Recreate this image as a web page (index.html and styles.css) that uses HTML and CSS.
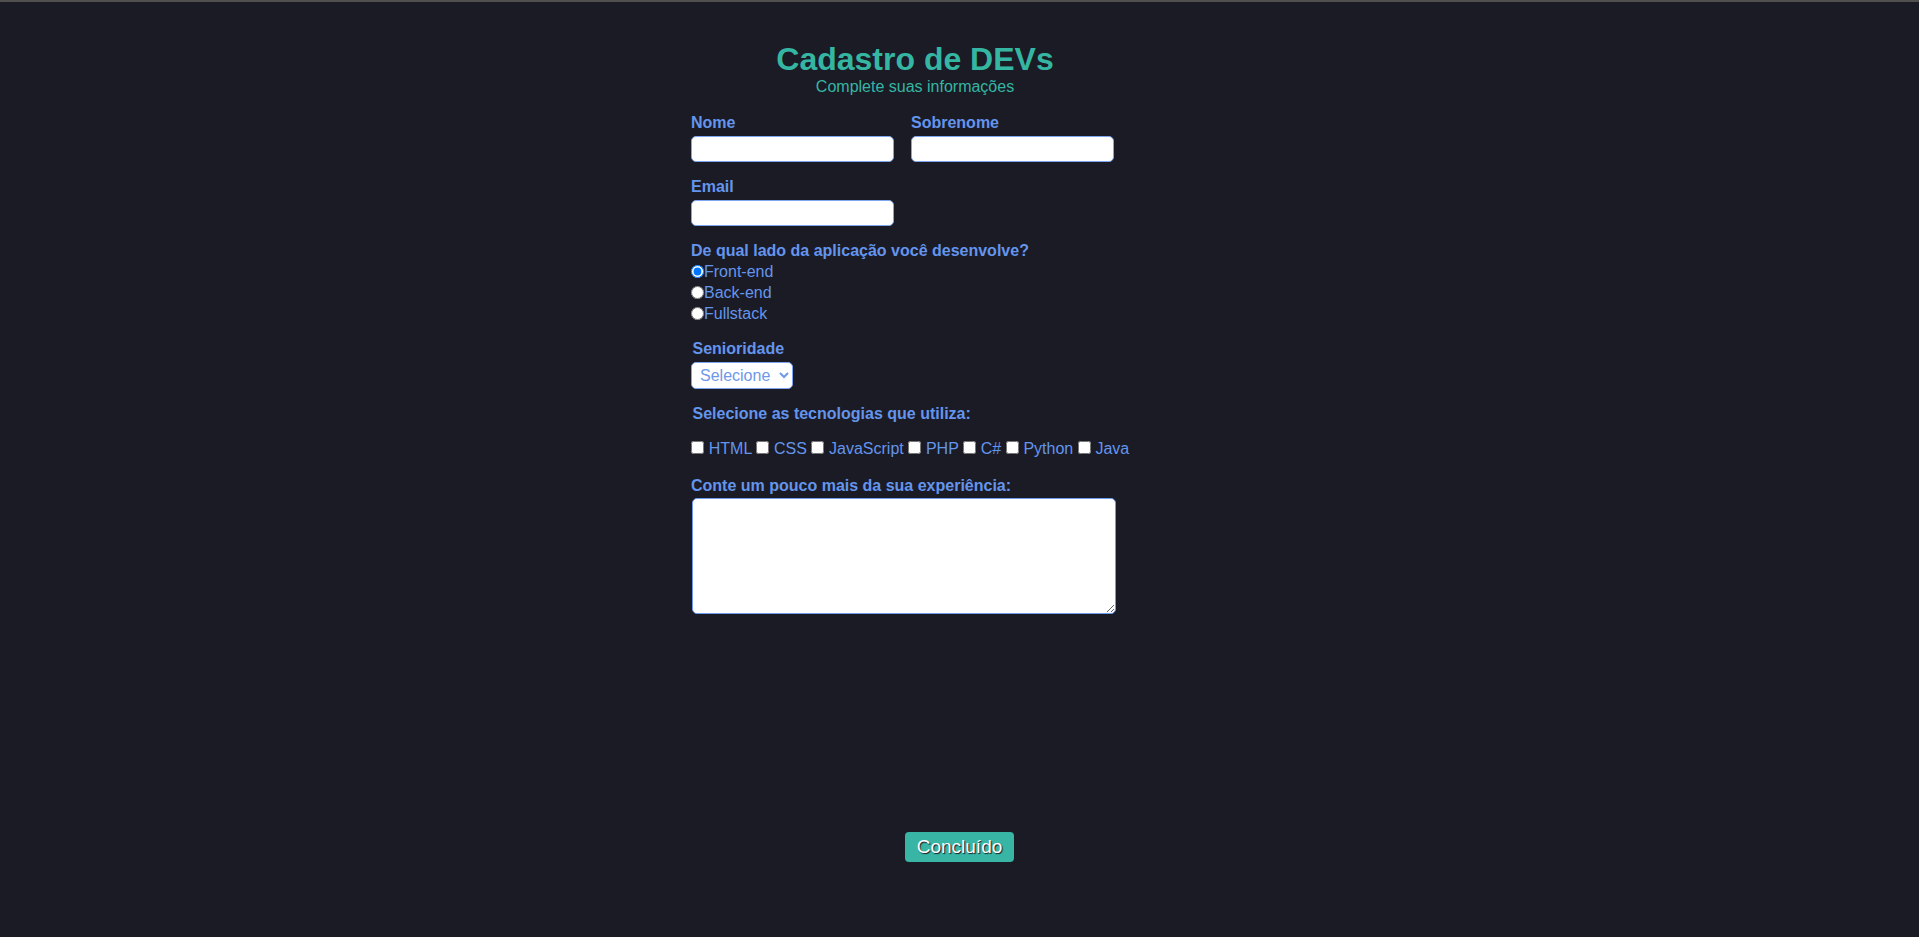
FILE: index.html
```html
<!DOCTYPE html>
<html lang="pt-BR">
<head>
<meta charset="utf-8">
<title>Cadastro de DEVs</title>
<link rel="stylesheet" href="styles.css">
</head>
<body>
<main class="page">
  <form class="form">
    <header class="head">
      <h1 class="title">Cadastro de DEVs</h1>
      <p class="subtitle">Complete suas informações</p>
    </header>

    <div class="names">
      <div class="field">
        <label class="label" for="nome">Nome</label>
        <input class="text-input" type="text" id="nome">
      </div>
      <div class="field">
        <label class="label" for="sobrenome">Sobrenome</label>
        <input class="text-input" type="text" id="sobrenome">
      </div>
    </div>

    <div class="field email">
      <label class="label" for="email">Email</label>
      <input class="text-input" type="email" id="email">
    </div>

    <div class="field side">
      <span class="label">De qual lado da aplicação você desenvolve?</span>
      <div class="radios">
        <div class="radio-row"><input class="radio" type="radio" name="lado" id="front" checked><label class="opt" for="front">Front-end</label></div>
        <div class="radio-row"><input class="radio" type="radio" name="lado" id="back"><label class="opt" for="back">Back-end</label></div>
        <div class="radio-row"><input class="radio" type="radio" name="lado" id="full"><label class="opt" for="full">Fullstack</label></div>
      </div>
    </div>

    <div class="field senior">
      <label class="label indent" for="senioridade">Senioridade</label>
      <select class="select" id="senioridade">
        <option>Selecione</option>
        <option>Júnior</option>
        <option>Pleno</option>
        <option>Sênior</option>
      </select>
    </div>

    <div class="field techs">
      <span class="label indent">Selecione as tecnologias que utiliza:</span>
      <p class="tech-row"><input class="check" type="checkbox" id="html"> <label class="opt" for="html">HTML</label> <input class="check" type="checkbox" id="css"> <label class="opt" for="css">CSS</label> <input class="check" type="checkbox" id="js"> <label class="opt" for="js">JavaScript</label> <input class="check" type="checkbox" id="php"> <label class="opt" for="php">PHP</label> <input class="check" type="checkbox" id="cs"> <label class="opt" for="cs">C#</label> <input class="check" type="checkbox" id="py"> <label class="opt" for="py">Python</label> <input class="check" type="checkbox" id="java"> <label class="opt" for="java">Java</label></p>
    </div>

    <div class="field exp">
      <label class="label" for="exp">Conte um pouco mais da sua experiência:</label>
      <textarea class="textarea" id="exp"></textarea>
    </div>
  </form>

  <div class="actions">
    <button class="btn" type="button">Concluído</button>
  </div>
</main>
</body>
</html>
```

FILE: styles.css
```css
html {
  background: #1b1b25;
}

body {
  margin: 0;
  min-height: 935px;
  border-top: 2px solid #505050;
  background: #1b1b25;
  font-family: "Liberation Sans", Arial, sans-serif;
  color: #6495ed;
}

.page {
  padding-top: 39px;
}

.form {
  width: 448px;
  margin-left: calc(50% - 268.5px);
  display: flex;
  flex-direction: column;
}

.head {
  text-align: center;
}

.title {
  margin: 0;
  font-size: 32px;
  line-height: 37px;
  font-weight: 700;
  color: #35b6a3;
}

.subtitle {
  margin: 0;
  font-size: 16px;
  line-height: 18px;
  color: #35b6a3;
}

.names {
  display: flex;
  gap: 17px;
  margin-top: 18px;
}

.field {
  display: flex;
  flex-direction: column;
  align-items: flex-start;
}

.label {
  font-size: 16px;
  line-height: 18px;
  font-weight: 700;
  color: #6495ed;
}

.indent {
  padding-left: 1.5px;
}

.text-input {
  box-sizing: border-box;
  width: 203px;
  height: 26px;
  margin-top: 4px;
  border: 1px solid #7ea6ee;
  border-radius: 5px;
  background: #fff;
  padding: 0 6px;
  font-family: inherit;
  font-size: 15px;
}

.email {
  margin-top: 16px;
}

.side {
  margin-top: 16px;
}

.radios {
  margin-top: 1px;
  display: flex;
  flex-direction: column;
}

.radio-row {
  height: 21px;
  line-height: 21px;
  font-size: 16px;
}

.radio {
  width: 13px;
  height: 13px;
  margin: 0;
  vertical-align: -1px;
}

.opt {
  font-size: 16px;
  color: #6495ed;
}

.senior {
  margin-top: 16px;
}

.select {
  box-sizing: border-box;
  width: 102px;
  height: 27px;
  margin-top: 4px;
  border: 1px solid #7ea6ee;
  border-radius: 5px;
  background: #fff;
  color: #6f98e8;
  font-family: inherit;
  font-size: 16px;
  padding: 0 2px 0 4px;
}

.techs {
  margin-top: 16px;
}

.tech-row {
  margin: 17px 0 0;
  font-size: 16px;
  line-height: 18px;
  white-space: nowrap;
}

.check {
  width: 13px;
  height: 13px;
  margin: 0 0.3px 0 0;
  vertical-align: baseline;
}

.exp {
  margin-top: 19px;
}

.textarea {
  box-sizing: border-box;
  width: 424px;
  height: 116px;
  margin: 3px 0 0 0.5px;
  border: 1px solid #6d9bec;
  border-radius: 5px;
  background: #fff;
  font-family: inherit;
  font-size: 14px;
}

.actions {
  margin-top: 218px;
  display: flex;
  justify-content: center;
}

.btn {
  width: 109px;
  height: 30px;
  padding: 0;
  border: none;
  border-radius: 4px;
  background: #38b5a4;
  color: #fff;
  font-family: inherit;
  font-size: 19px;
  line-height: 22px;
  text-shadow: 1px 1px 1px #1b1b25;
  cursor: pointer;
}
```
